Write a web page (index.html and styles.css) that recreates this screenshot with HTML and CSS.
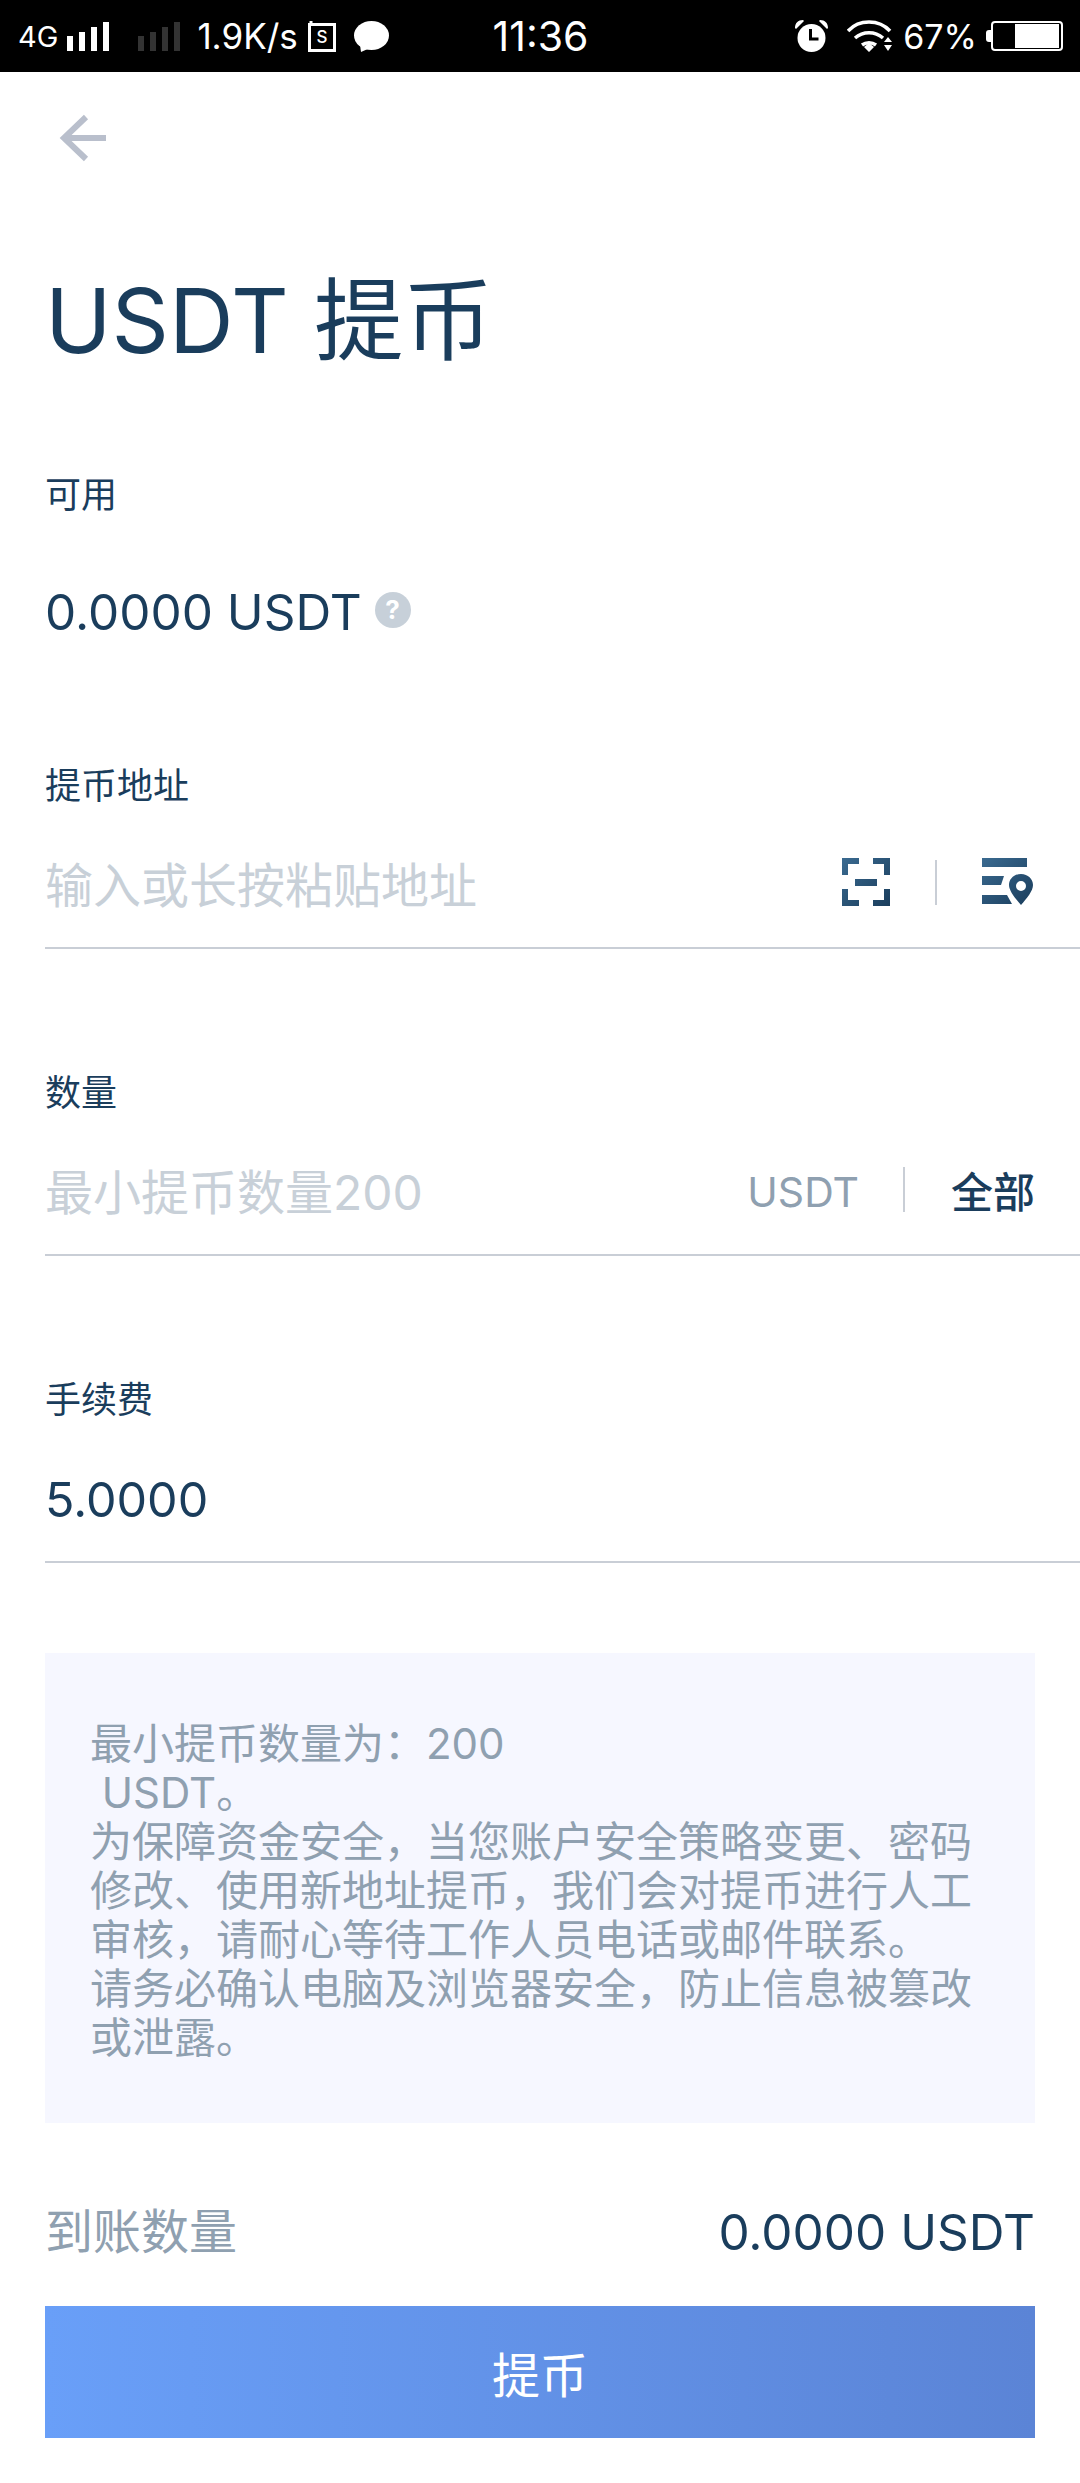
FILE: index.html
```html
<!DOCTYPE html>
<html lang="zh-CN">
<head>
  <meta charset="UTF-8">
  <title>USDT 提币</title>
  <link rel="stylesheet" href="styles.css">
</head>
<body>

  <!-- Status bar -->
  <div class="status-bar">
    <div class="status-left">
      <span class="net">4G</span>
      <svg class="signal" width="42" height="29" viewBox="0 0 42 29"><path fill="#fff" d="M0 14h6v15H0zM12 10h6v19h-6zM24 5h6v24h-6zM36 0h6v29h-6z"/></svg>
      <svg class="signal dim" width="42" height="29" viewBox="0 0 42 29"><path fill="#333" d="M0 14h6v15H0zM12 10h6v19h-6zM24 5h6v24h-6zM36 0h6v29h-6z"/></svg>
      <span class="speed">1.9K/s</span>
      <svg class="app-s" width="28" height="31" viewBox="0 0 28 31"><path fill="none" stroke="#fff" stroke-width="3" d="M1.500 3.500h25v26h-25zM3 0v4"/><text x="14" y="22" text-anchor="middle" fill="#fff" font-size="17" font-family="Inter, sans-serif" font-weight="500">S</text></svg>
      <svg class="chat" width="35" height="31" viewBox="0 0 35 31"><ellipse cx="17.500" cy="14.500" rx="17.500" ry="14.500" fill="#fff"/><path fill="#fff" d="M6 24l1 7 9-4z"/></svg>
    </div>
    <div class="status-time">11:36</div>
    <div class="status-right">
      <svg class="alarm" width="33" height="32" viewBox="0 0 33 32"><circle cx="16.500" cy="18" r="14" fill="#fff"/><path fill="#fff" d="M0 8c0-5 3-8 8-8l1 1-8 8zM33 8c0-5-3-8-8-8l-1 1 8 8z"/><path fill="none" stroke="#000" stroke-width="3" d="M15.500 9v10h8"/></svg>
      <svg class="wifi" width="46" height="32" viewBox="0 0 46 32"><path fill="none" stroke="#fff" stroke-width="3.500" d="M1 11C12 -1 32 -1 43 11M8 18c8-7 20-7 28 0M15 25c4-3 10-3 14 0"/><path fill="#fff" d="M17 27l5-4 5 4-5 5zM37 22l4-5 4 5zM37 25h8l-4 6z"/></svg>
      <span class="battery-pct">67%</span>
      <div class="battery">
        <span class="battery-cap"></span>
        <span class="battery-body"><span class="battery-level"></span></span>
      </div>
    </div>
  </div>

  <main class="page">
    <a class="back" href="#">
      <svg width="48" height="48" viewBox="0 0 48 48"><path fill="none" stroke="#b9bfcc" stroke-width="6" d="M48 24H6M28 3L6 24l22 21"/></svg>
    </a>

    <h1 class="title">USDT 提币</h1>

    <section class="avail">
      <div class="label">可用</div>
      <div class="avail-value">
        <span>0.0000 USDT</span>
        <span class="help">?</span>
      </div>
    </section>

    <section class="field field-address">
      <div class="label">提币地址</div>
      <div class="input-row">
        <span class="placeholder">输入或长按粘贴地址</span>
        <svg class="scan-icon" width="48" height="48" viewBox="0 0 48 48">
          <defs><linearGradient id="grad1" x1="0" y1="0" x2="1" y2="1"><stop offset="0" stop-color="#3a6a90"/><stop offset="1" stop-color="#1a3d5c"/></linearGradient></defs>
          <path fill="url(#grad1)" d="M0 0h17v6H6v11H0zM31 0h17v17h-6V6H31zM0 31h6v11h11v6H0zM42 31h6v17H31v-6h11zM13 21h22v7H13z"/>
        </svg>
        <span class="divider"></span>
        <svg class="book-icon" width="51" height="48" viewBox="0 0 51 48">
          <defs><linearGradient id="grad2" x1="0" y1="0" x2="1" y2="1"><stop offset="0" stop-color="#3a6a90"/><stop offset="1" stop-color="#1a3d5c"/></linearGradient></defs>
          <path fill="url(#grad2)" fill-rule="evenodd" d="M0 0h45v9H0zM0 18h22l-3 9H0zM0 37h25l5 9H0zM39 16c-7 0-12 5-12 11 0 6 6 13 12 20 6-7 12-14 12-20 0-6-5-11-12-11zm0 7a5 5 0 1 1 0 10 5 5 0 0 1 0-10z"/>
        </svg>
      </div>
    </section>

    <section class="field">
      <div class="label">数量</div>
      <div class="input-row">
        <span class="placeholder">最小提币数量200</span>
        <span class="unit">USDT</span>
        <span class="divider"></span>
        <span class="all">全部</span>
      </div>
    </section>

    <section class="field">
      <div class="label">手续费</div>
      <div class="input-row">
        <span class="fee">5.0000</span>
      </div>
    </section>

    <div class="notice">最小提币数量为：200<br>&nbsp;USDT。<br>为保障资金安全，当您账户安全策略变更、密码修改、使用新地址提币，我们会对提币进行人工审核，请耐心等待工作人员电话或邮件联系。<br>请务必确认电脑及浏览器安全，防止信息被篡改或泄露。</div>

    <div class="receive">
      <span class="receive-label">到账数量</span>
      <span class="receive-value">0.0000 USDT</span>
    </div>

    <button class="submit">提币</button>
  </main>

</body>
</html>
```

FILE: styles.css
```css
/* Global Styles */
body {
  margin: 0;
  padding: 0;
  background-color: #fff;
  color: #1a3d5c;
  font-family: Inter, "Noto Sans CJK SC", sans-serif;
}

/* Status bar */
.status-bar {
  height: 72px;
  background-color: #000;
  color: #fff;
  display: grid;
  grid-template-columns: 1fr auto 1fr;
  align-items: center;
  padding: 0 17px 0 18px;
  box-sizing: border-box;
}

.status-left,
.status-right {
  display: flex;
  align-items: center;
}

.status-right {
  justify-content: flex-end;
}

.net {
  font-size: 29px;
  margin-right: 9px;
}

.signal.dim {
  margin-left: 29px;
}

.speed {
  font-size: 35px;
  margin-left: 17px;
  margin-right: 10px;
}

.chat {
  margin-left: 18px;
}

.status-time {
  font-size: 41px;
}

.wifi {
  margin-left: 19px;
}

.battery-pct {
  font-size: 34px;
  margin-left: 10px;
}

.battery {
  display: flex;
  align-items: center;
  margin-left: 9px;
}

.battery-cap {
  width: 5px;
  height: 12px;
  background-color: #fff;
  border-radius: 3px 0 0 3px;
}

.battery-body {
  width: 72px;
  height: 30px;
  box-sizing: border-box;
  border: 2px solid #fff;
  border-radius: 4px;
  padding: 1px 2px;
  display: flex;
  justify-content: flex-end;
}

.battery-level {
  width: 44px;
  background-color: #fff;
}

/* Main content */
.page {
  padding: 0 0 0 45px;
}

.back {
  display: block;
  width: 48px;
  height: 48px;
  margin: 42px 0 0 13px;
}

.title {
  margin: 104px 0 0;
  font-size: 89.500px;
  font-weight: 400;
  line-height: 110px;
}

.label {
  font-size: 36px;
  line-height: 44px;
}

.avail {
  margin-top: 97px;
}

.avail-value {
  margin-top: 65px;
  font-size: 49.500px;
  line-height: 60px;
  display: flex;
  align-items: center;
}

.help {
  width: 36px;
  height: 36px;
  border-radius: 50%;
  background-color: #c7d0d9;
  color: #fff;
  font-size: 26px;
  font-weight: 700;
  line-height: 36px;
  text-align: center;
  margin-left: 13px;
  margin-bottom: 4px;
}

.field-address {
  margin-top: 122px;
}

.field {
  border-bottom: 2px solid #c9ced6;
}

.field + .field {
  margin-top: 122px;
}

.input-row {
  height: 130px;
  margin-top: 9px;
  padding-right: 47px;
  display: flex;
  align-items: center;
  font-size: 48px;
}

.placeholder {
  color: #c8d0d8;
  flex: 1;
}

.divider {
  width: 2px;
  height: 45px;
  background-color: #c9ced6;
}

.scan-icon {
  margin-right: 45px;
}

.book-icon {
  margin-left: 45px;
}

.unit {
  color: #8fa0b0;
  font-size: 41px;
  margin-top: 5px;
  margin-right: 44px;
}

.all {
  margin-left: 46px;
  margin-right: -2px;
  font-size: 42px;
  font-weight: 500;
}

.fee {
  font-size: 48.500px;
  margin-top: 6px;
}

.notice {
  width: 990px;
  margin-top: 90px;
  padding: 66px 60px 61px 45px;
  box-sizing: border-box;
  background-color: #f6f7ff;
  color: #8fa0b0;
  font-size: 42px;
  line-height: 49px;
}

.receive {
  width: 990px;
  margin-top: 75px;
  display: flex;
  justify-content: space-between;
  align-items: center;
  font-size: 49.500px;
  line-height: 68px;
}

.receive-label {
  color: #8fa0b0;
  font-size: 48px;
}

.submit {
  display: block;
  width: 990px;
  height: 132px;
  margin-top: 40px;
  border: 0;
  background: linear-gradient(90deg, #699ff8, #5b84d6);
  color: #fff;
  font-family: inherit;
  font-size: 48px;
}
```
